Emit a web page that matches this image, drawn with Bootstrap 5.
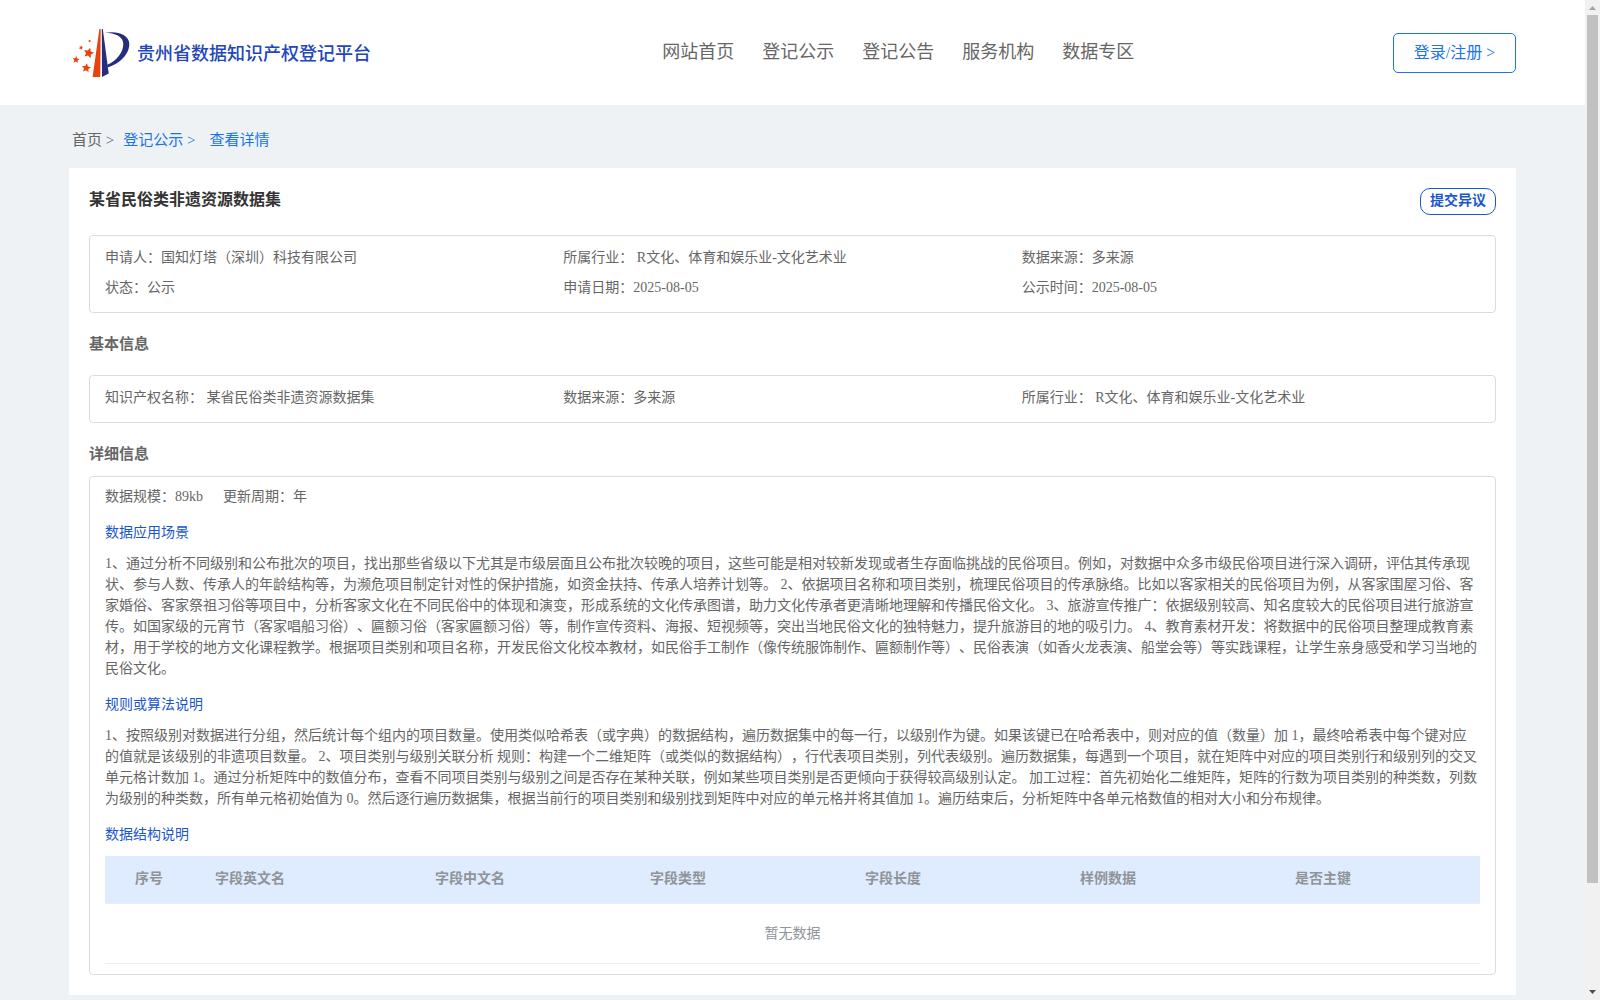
<!DOCTYPE html>
<html lang="zh-CN">
<head>
<meta charset="utf-8">
<meta name="viewport" content="width=device-width, initial-scale=1">
<title>贵州省数据知识产权登记平台</title>
<link href="https://cdn.jsdelivr.net/npm/bootstrap@5.3.0/dist/css/bootstrap.min.css" rel="stylesheet">
<style>
  :root { --brand: #1a73f0; --deep: #1b57cc; --line: #dcdcdc; }
  body { background: #eef2f5; color: #666; font: 14px/21px "Liberation Serif", "Noto Sans CJK SC", serif; text-spacing-trim: space-all; padding-right: 15px; }
  a { color: inherit; text-decoration: none; }
  .wrap { padding-left: 69px; padding-right: 69px; }
  .topbar { height: 105px; }
  .topbar .side-start { flex: 17 1 0; padding: 3px 0 0 3px; }
  .topbar .side-end { flex: 11 1 0; }
  .site-name { font-size: 18px; font-weight: 500; color: #2346b8; line-height: 24px; padding-left: 5px; }
  .menu { gap: 28px; font-size: 18px; line-height: 24px; padding-bottom: 2px; }
  .btn-login { width: 123px; height: 40px; border: 1px solid var(--brand); border-radius: 5px; color: var(--brand); font-size: 16px; line-height: 24px; padding: 0; }
  .crumbs { height: 63px; font-size: 15px; padding: 8px 3px 0; }
  .crumbs a.on { color: var(--brand); margin-left: 9px; }
  .crumbs a.here { margin-left: 14px; }
  .panel { padding: 20px; }
  .data-title { font-size: 16px; line-height: 24px; font-weight: 700; color: #333; margin: 0; }
  .btn-object { width: 76px; height: 27px; border: 1px solid var(--deep); border-radius: 10px; color: var(--deep); font-size: 14px; line-height: 20px; font-weight: 700; padding: 0 0 2px; }
  .frame { border: 1px solid var(--line); border-radius: 4px; padding: 0 15px; }
  .frame.detail { padding-top: 9px; padding-bottom: 10px; }
  .facts { padding-top: 7px; padding-bottom: 9px; margin: 0; }
  .facts > div { padding: 0; line-height: 30px; white-space: pre; }
  .sect { font-size: 15px; line-height: 22px; font-weight: 700; margin: 20px 0; }
  .sect.tight { margin-bottom: 11px; }
  .size-info { gap: 20px; }
  .sub-head { font-size: 14px; line-height: 21px; font-weight: 400; color: var(--deep); margin: 15px 0 10px; }
  .fields { table-layout: fixed; width: 100%; margin-top: 11px; color: #909399; }
  .fields th { background: #dfecff; height: 47px; padding: 0 10px 2px; font-weight: 700; border-bottom: 1px solid #ebeef5; }
  .fields td { height: 60px; text-align: center; border-bottom: 1px solid #ebeef5; }
  .c-no { width: 100px; } .c-en { width: 220px; } .c-mid { width: 215px; }
  .fields th.c-no { padding-left: 30px; }
  .scroller { width: 15px; background: #f1f1f1; }
  .scroller .thumb { width: 11px; flex: 0 0 86.8%; background: #c1c1c1; }
  .scroller svg { flex: 0 0 15px; }
</style>
<script src="https://cdn.jsdelivr.net/npm/bootstrap@5.3.0/dist/js/bootstrap.bundle.min.js" defer></script>
</head>
<body>
<header class="topbar wrap bg-white d-flex align-items-center">
  <div class="side-start d-flex">
    <a href="#" class="d-flex align-items-center">
      <svg width="60" height="52" viewBox="0 0 60 52" aria-hidden="true">
        <defs><path id="star" d="M0-10L2.800-3.800 9.500-3.100 4.500 1.500 5.900 8.100 0 4.700-5.900 8.100-4.500 1.500-9.500-3.100-2.800-3.800z"/></defs>
        <path fill="#e8430f" d="M27.400 1h1.300L28.300 49H20.600z"/>
        <path fill="#262c80" d="M29.800 1h1L36.700 45.500 30 49z"/>
        <path fill="#262c80" d="M33 4.800C45 2.500 57.300 6.500 57.300 16 57.300 27 47 36 35.300 39.500V36.800C44 33 51.300 25 51.300 16 51.300 8.500 43 5 33 4.800z"/>
        <g fill="#e8430f">
          <use href="#star" transform="translate(16.700 25) rotate(15) scale(.55)"/>
          <use href="#star" transform="translate(4 31.700) rotate(5) scale(.36)"/>
          <use href="#star" transform="translate(14.300 40) rotate(8) scale(.48)"/>
          <use href="#star" transform="translate(9 19.700) rotate(25) scale(.23)"/>
          <use href="#star" transform="translate(17.700 13) rotate(25) scale(.16)"/>
        </g>
      </svg>
      <span class="site-name">贵州省数据知识产权登记平台</span>
    </a>
  </div>
  <nav class="menu d-flex" aria-label="主导航">
    <a href="#">网站首页</a><a href="#">登记公示</a><a href="#">登记公告</a><a href="#">服务机构</a><a href="#">数据专区</a>
  </nav>
  <div class="side-end d-flex justify-content-end"><button type="button" class="btn btn-login">登录/注册 &gt;</button></div>
</header>
<main class="wrap">
  <nav class="crumbs d-flex align-items-center" aria-label="面包屑">
    <a href="#">首页 &gt;</a><a href="#" class="on">登记公示 &gt;</a><a href="#" class="on here">查看详情</a>
  </nav>
  <article class="panel bg-white">
    <div class="d-flex justify-content-between align-items-start mb-3 pb-1">
      <h1 class="data-title">某省民俗类非遗资源数据集</h1>
      <button type="button" class="btn btn-object">提交异议</button>
    </div>
    <div class="frame">
      <div class="facts row">
        <div class="col-4">申请人：国知灯塔（深圳）科技有限公司</div>
        <div class="col-4">所属行业： R文化、体育和娱乐业-文化艺术业</div>
        <div class="col-4">数据来源：多来源</div>
        <div class="col-4">状态：公示</div>
        <div class="col-4">申请日期：2025-08-05</div>
        <div class="col-4">公示时间：2025-08-05</div>
      </div>
    </div>
    <h2 class="sect">基本信息</h2>
    <div class="frame">
      <div class="facts row">
        <div class="col-4">知识产权名称： 某省民俗类非遗资源数据集</div>
        <div class="col-4">数据来源：多来源</div>
        <div class="col-4">所属行业： R文化、体育和娱乐业-文化艺术业</div>
      </div>
    </div>
    <h2 class="sect tight">详细信息</h2>
    <div class="frame detail">
      <div class="size-info d-flex"><span>数据规模：89kb</span><span>更新周期：年</span></div>
      <h3 class="sub-head">数据应用场景</h3>
      <p class="m-0">1、通过分析不同级别和公布批次的项目，找出那些省级以下尤其是市级层面且公布批次较晚的项目，这些可能是相对较新发现或者生存面临挑战的民俗项目。例如，对数据中众多市级民俗项目进行深入调研，评估其传承现状、参与人数、传承人的年龄结构等，为濒危项目制定针对性的保护措施，如资金扶持、传承人培养计划等。 2、依据项目名称和项目类别，梳理民俗项目的传承脉络。比如以客家相关的民俗项目为例，从客家围屋习俗、客家婚俗、客家祭祖习俗等项目中，分析客家文化在不同民俗中的体现和演变，形成系统的文化传承图谱，助力文化传承者更清晰地理解和传播民俗文化。 3、旅游宣传推广：依据级别较高、知名度较大的民俗项目进行旅游宣传。如国家级的元宵节（客家唱船习俗）、匾额习俗（客家匾额习俗）等，制作宣传资料、海报、短视频等，突出当地民俗文化的独特魅力，提升旅游目的地的吸引力。 4、教育素材开发：将数据中的民俗项目整理成教育素材，用于学校的地方文化课程教学。根据项目类别和项目名称，开发民俗文化校本教材，如民俗手工制作（像传统服饰制作、匾额制作等）、民俗表演（如香火龙表演、船堂会等）等实践课程，让学生亲身感受和学习当地的民俗文化。</p>
      <h3 class="sub-head">规则或算法说明</h3>
      <p class="m-0">1、按照级别对数据进行分组，然后统计每个组内的项目数量。使用类似哈希表（或字典）的数据结构，遍历数据集中的每一行，以级别作为键。如果该键已在哈希表中，则对应的值（数量）加 1，最终哈希表中每个键对应的值就是该级别的非遗项目数量。 2、项目类别与级别关联分析 规则：构建一个二维矩阵（或类似的数据结构），行代表项目类别，列代表级别。遍历数据集，每遇到一个项目，就在矩阵中对应的项目类别行和级别列的交叉单元格计数加 1。通过分析矩阵中的数值分布，查看不同项目类别与级别之间是否存在某种关联，例如某些项目类别是否更倾向于获得较高级别认定。 加工过程：首先初始化二维矩阵，矩阵的行数为项目类别的种类数，列数为级别的种类数，所有单元格初始值为 0。然后逐行遍历数据集，根据当前行的项目类别和级别找到矩阵中对应的单元格并将其值加 1。遍历结束后，分析矩阵中各单元格数值的相对大小和分布规律。</p>
      <h3 class="sub-head">数据结构说明</h3>
      <table class="fields">
        <thead><tr>
          <th scope="col" class="c-no">序号</th><th scope="col" class="c-en">字段英文名</th><th scope="col" class="c-mid">字段中文名</th><th scope="col" class="c-mid">字段类型</th><th scope="col" class="c-mid">字段长度</th><th scope="col" class="c-mid">样例数据</th><th scope="col">是否主键</th>
        </tr></thead>
        <tbody><tr><td colspan="7">暂无数据</td></tr></tbody>
      </table>
    </div>
  </article>
</main>
<div class="scroller position-fixed top-0 end-0 vh-100 d-flex flex-column align-items-center" aria-hidden="true">
  <svg width="15" height="15" viewBox="0 0 15 15"><path fill="#a3a3a3" d="M4 10l3.500-4 3.500 4z"/></svg>
  <div class="thumb"></div>
  <svg class="mt-auto" width="15" height="15" viewBox="0 0 15 15"><path fill="#505050" d="M4 5h7L7.500 9z"/></svg>
</div>
</body>
</html>
